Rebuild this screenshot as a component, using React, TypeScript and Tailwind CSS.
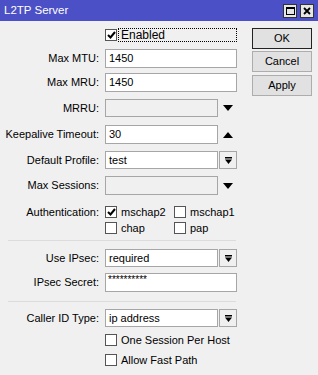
import { FC, ReactNode } from 'react'

const font = { fontFamily: '"Liberation Sans", Arial, sans-serif' }

// small arrow glyph used in the dropdown buttons
const DropIcon: FC = () => (
    <svg width="9" height="9" viewBox="0 0 9 9">
        <rect x="1" y="1" width="7" height="1.5" fill="#000" />
        <polygon points="1,3.5 8,3.5 4.5,8" fill="#000" />
    </svg>
)

const Tri: FC<{ up?: boolean }> = ({ up }) => (
    <svg width="10" height="6" viewBox="0 0 10 6" className="ml-[5px]">
        {up ? <polygon points="0,6 10,6 5,0" fill="#000" /> : <polygon points="0,0 10,0 5,6" fill="#000" />}
    </svg>
)

const Check: FC<{ on?: boolean }> = ({ on }) => (
    <span className="w-[12px] h-[12px] border border-[#555] bg-white flex items-center justify-center shrink-0">
        {on && (
            <svg width="9" height="8" viewBox="0 0 9 8">
                <path d="M1 4 L3.5 6.5 L8 1" stroke="#000" strokeWidth="2" fill="none" />
            </svg>
        )}
    </span>
)

const Label: FC<{ children?: ReactNode }> = ({ children }) => (
    <span className="w-[99px] text-right shrink-0 whitespace-nowrap">{children}</span>
)

const Input: FC<{ value?: string, w?: string, disabled?: boolean }> = ({ value, w = 'w-[132px]', disabled }) => (
    <div className={`${w} h-full border border-[#a6a6a6] ${disabled ? 'bg-[#f0f0f0]' : 'bg-white'} pl-[3px] flex items-center leading-none`}>
        {value}
    </div>
)

const Row: FC<{ label?: string, className?: string, children?: ReactNode }> = ({ label, className = '', children }) => (
    <div className={`flex items-center ${className}`}>
        <Label>{label}</Label>
        <div className="ml-[6px] flex items-center h-full">{children}</div>
    </div>
)

const Select: FC<{ value: string }> = ({ value }) => (
    <>
        <Input value={value} w="w-[113px]" />
        <div className="ml-[1px] w-[18px] h-full border border-[#a6a6a6] bg-[#f0f0f0] flex items-center justify-center">
            <DropIcon />
        </div>
    </>
)

const CheckLabel: FC<{ on?: boolean, text: string, className?: string }> = ({ on, text, className = '' }) => (
    <div className={`flex items-center gap-[4px] ${className}`}>
        <Check on={on} />
        <span>{text}</span>
    </div>
)

const Btn: FC<{ text: string, main?: boolean, className?: string }> = ({ text, main, className = '' }) => (
    <div className={`w-[60px] h-[21px] flex items-center justify-center bg-[#e1e1e1] border ${main ? 'border-[#222]' : 'border-[#adadad]'} ${className}`}>
        {text}
    </div>
)

const App: FC = () => {
    return (
        <div className="w-[318px] h-[375px] bg-[#f0f0f0] text-[11px] text-black overflow-hidden" style={font}>
            {/* title bar */}
            <div className="h-[21px] bg-[#4c50c6] flex items-center pl-[4px] pr-[4px]">
                <span className="text-white text-[11.5px]">L2TP Server</span>
                <div className="ml-auto flex gap-[3px]">
                    <div className="w-[14px] h-[14px] bg-[#e6e6e6] border border-[#333] flex items-center justify-center">
                        <div className="w-[9px] h-[8px] border border-[#000] border-t-2" />
                    </div>
                    <div className="w-[14px] h-[14px] bg-[#e6e6e6] border border-[#333] flex items-center justify-center">
                        <svg width="8" height="8" viewBox="0 0 8 8">
                            <path d="M1 1 L7 7 M7 1 L1 7" stroke="#000" strokeWidth="1.8" />
                        </svg>
                    </div>
                </div>
            </div>

            <div className="flex">
                {/* form */}
                <div className="w-[245px] flex flex-col">
                    <div className="mt-[7px] h-[14px] flex items-center">
                        <div className="ml-[105px] flex items-center">
                            <Check on />
                            <span className="ml-[1px] w-[119px] h-[14px] border border-dotted border-[#000] pl-[2px] flex items-center leading-none text-[12px]">Enabled</span>
                        </div>
                    </div>
                    <Row label="Max MTU:" className="mt-[7px] h-[19px]"><Input value="1450" /></Row>
                    <Row label="Max MRU:" className="mt-[5px] h-[19px]"><Input value="1450" /></Row>
                    <Row label="MRRU:" className="mt-[7px] h-[18px]"><Input w="w-[113px]" disabled /><Tri /></Row>
                    <Row label="Keepalive Timeout:" className="mt-[8px] h-[19px]"><Input value="30" w="w-[113px]" /><Tri up /></Row>
                    <Row label="Default Profile:" className="mt-[7px] h-[18px]"><Select value="test" /></Row>
                    <Row label="Max Sessions:" className="mt-[7px] h-[19px]"><Input w="w-[113px]" disabled /><Tri /></Row>
                    <Row label="Authentication:" className="mt-[9px] h-[16px]">
                        <CheckLabel on text="mschap2" className="w-[69px]" />
                        <CheckLabel text="mschap1" />
                    </Row>
                    <Row className="h-[16px]">
                        <CheckLabel text="chap" className="w-[69px]" />
                        <CheckLabel text="pap" />
                    </Row>
                    <div className="mt-[4px] ml-[8px] w-[228px] h-px bg-[#dcdcdc]" />
                    <Row label="Use IPsec:" className="mt-[8px] h-[18px]"><Select value="required" /></Row>
                    <Row label="IPsec Secret:" className="mt-[6px] h-[19px]">
                        <div className="w-[132px] h-full border border-[#a6a6a6] bg-white pl-[2px] pt-[1px] leading-none text-[10px]">**********</div>
                    </Row>
                    <div className="mt-[9px] ml-[8px] w-[228px] h-px bg-[#dcdcdc]" />
                    <Row label="Caller ID Type:" className="mt-[7px] h-[18px]"><Select value="ip address" /></Row>
                    <Row className="mt-[5px] h-[16px]"><CheckLabel text="One Session Per Host" /></Row>
                    <Row className="mt-[4px] h-[16px]"><CheckLabel text="Allow Fast Path" /></Row>
                </div>

                {/* buttons */}
                <div className="ml-[7px] mt-[7px] flex flex-col">
                    <Btn text="OK" main />
                    <Btn text="Cancel" className="mt-[2px]" />
                    <Btn text="Apply" className="mt-[3px]" />
                </div>
            </div>
        </div>
    )
}

export default App
